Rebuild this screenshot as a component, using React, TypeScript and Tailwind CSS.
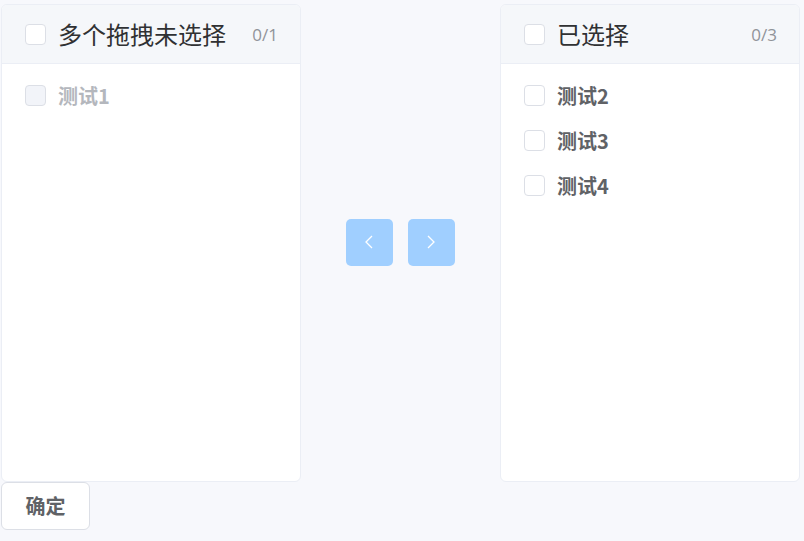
import React from "react";

const font = { fontFamily: '"Noto Sans CJK SC", "Noto Sans", sans-serif' };
const numFont = { fontFamily: '"Open Sans", "Noto Sans", sans-serif' };

function Box({ disabled }: { disabled?: boolean }) {
  return (
    <span
      className={
        "inline-block w-[21px] h-[21px] rounded-[4px] border border-[#dcdfe6] shrink-0 " +
        (disabled ? "bg-[#f2f4f9]" : "bg-white")
      }
    />
  );
}

function Panel({
  title,
  count,
  items,
  disabled,
}: {
  title: string;
  count: string;
  items: string[];
  disabled?: boolean;
}) {
  return (
    <div className="w-[300px] h-[478px] bg-white border border-[#ebeef5] rounded-[6px] overflow-hidden flex flex-col shrink-0">
      <div className="h-[59px] bg-[#f5f7fa] border-b border-[#ebeef5] flex items-center pl-[23px] pr-[22px] shrink-0">
        <Box />
        <span className="ml-[12px] text-[24px] text-[#303133] leading-none">{title}</span>
        <span className="ml-auto text-[17px] text-[#909399] leading-none" style={numFont}>
          {count}
        </span>
      </div>
      <div className="pt-[9px] flex flex-col">
        {items.map((it) => (
          <div key={it} className="h-[45px] flex items-center pl-[23px]">
            <Box disabled={disabled} />
            <span
              className={
                "ml-[12px] text-[20px] font-bold leading-none " +
                (disabled ? "text-[#b4b7bd]" : "text-[#606266]")
              }
            >
              {it}
            </span>
          </div>
        ))}
      </div>
    </div>
  );
}

function Arrow({ dir }: { dir: "left" | "right" }) {
  return (
    <button className="w-[47px] h-[47px] rounded-[5px] bg-[#a0cfff] flex items-center justify-center">
      <svg width="12" height="20" viewBox="0 0 12 20" fill="none">
        {dir === "left" ? (
          <path d="M9 4 L3 10 L9 16" stroke="white" strokeWidth="1.3" />
        ) : (
          <path d="M3 4 L9 10 L3 16" stroke="white" strokeWidth="1.3" />
        )}
      </svg>
    </button>
  );
}

export default function App() {
  return (
    <div className="min-h-[541px] w-[804px] bg-[#f7f8fc]" style={font}>
      <div className="pt-[4px] pl-[1px]">
        <div className="flex items-center">
          <Panel title="多个拖拽未选择" count="0/1" items={["测试1"]} disabled />
          <div className="w-[199px] flex items-center justify-center gap-[15px] pr-[1px] pb-[2px]">
            <Arrow dir="left" />
            <Arrow dir="right" />
          </div>
          <Panel title="已选择" count="0/3" items={["测试2", "测试3", "测试4"]} />
        </div>
        <button className="w-[89px] h-[48px] bg-white border border-[#dcdfe6] rounded-[6px] text-[20px] font-bold text-[#606266] flex items-center justify-center">
          确定
        </button>
      </div>
    </div>
  );
}
